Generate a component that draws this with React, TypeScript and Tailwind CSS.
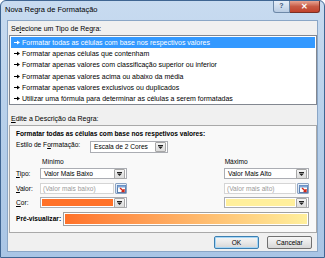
const font = "font-['Liberation_Sans',Arial,sans-serif]"

const RULES = [
  'Formatar todas as células com base nos respectivos valores',
  'Formatar apenas células que contenham',
  'Formatar apenas valores com classificação superior ou inferior',
  'Formatar apenas valores acima ou abaixo da média',
  'Formatar apenas valores exclusivos ou duplicados',
  'Utilizar uma fórmula para determinar as células a serem formatadas',
]

function RowArrow({ color }: { color: string }) {
  return (
    <svg width="6" height="5" viewBox="0 0 6 5" className="shrink-0">
      <rect x="0" y="2" width="3" height="1" fill={color} />
      <path d="M3 0.5 L6 2.5 L3 4.5 Z" fill={color} />
    </svg>
  )
}

function DropButton() {
  return (
    <div className="w-[11px] h-[10px] my-auto mr-[1px] flex items-center justify-center bg-gradient-to-b from-[#f4f4f4] to-[#dcdcdc] border border-[#a7a7a7] rounded-[1px]">
      <svg width="5" height="4" viewBox="0 0 5 4">
        <rect x="0" y="0" width="5" height="1" fill="#222" />
        <path d="M0 1.5 L5 1.5 L2.5 4 Z" fill="#222" />
      </svg>
    </div>
  )
}

function PickButton() {
  return (
    <div className="w-[12px] h-[11px] shrink-0 flex items-center justify-center bg-gradient-to-b from-[#eaf2fb] to-[#c9dcf1] border border-[#8da4c3] rounded-[1px]">
      <svg width="9" height="8" viewBox="0 0 9 8">
        <rect x="0.5" y="0.5" width="8" height="7" fill="#fff" stroke="#5a7fb0" />
        <rect x="0.5" y="0.5" width="8" height="2" fill="#7ea6d8" />
        <path d="M3 3 L7 6.5 M7 4 L7 6.5 L4.5 6.5" stroke="#d32a1a" strokeWidth="1.4" fill="none" />
      </svg>
    </div>
  )
}

function Select({ value, w }: { value: string; w: string }) {
  return (
    <div className={`${w} h-[11px] flex bg-white border border-[#abadb3]`}>
      <span className="flex-1 pl-[3px] text-[6.6px] leading-[9px] text-black truncate">{value}</span>
      <DropButton />
    </div>
  )
}

function ValueInput({ text, w }: { text: string; w: string }) {
  return (
    <div className="flex gap-[1px]">
      <div className={`${w} h-[11px] bg-white border border-[#d5d5d5] pl-[2px] text-[6.6px] leading-[9px] text-[#9a9a9a]`}>{text}</div>
      <PickButton />
    </div>
  )
}

function ColorPick({ color, w }: { color: string; w: string }) {
  return (
    <div className={`${w} h-[11px] flex bg-white border border-[#abadb3]`}>
      <div className="flex-1 m-[1px]" style={{ background: color }} />
      <DropButton />
    </div>
  )
}

function WinButton({ label, focused }: { label: string; focused?: boolean }) {
  return (
    <div
      className={`w-[45px] h-[13px] flex items-center justify-center rounded-[2px] border bg-gradient-to-b from-[#f6f6f6] via-[#e8e8e8] to-[#d6d6d6] text-[6.6px] text-black ${
        focused ? 'border-[#3c7fb1] shadow-[inset_0_0_0_1px_#a6d6f6]' : 'border-[#707070]'
      }`}
    >
      {label}
    </div>
  )
}

export default function App() {
  return (
    <div className={`${font} w-[325px] h-[258px] flex flex-col border border-[#3f6592] rounded-t-[6px] bg-gradient-to-b from-[#c8dbf0] via-[#b6cfea] to-[#a9c5e5] overflow-hidden`}>
      {/* title bar */}
      <div className="h-[19px] flex items-start shrink-0">
        <span className="pl-[4px] pt-[4px] text-[7.5px] leading-[10px] text-black">Nova Regra de Formatação</span>
        <div className="ml-auto mr-[4px] flex">
          <div className="w-[17px] h-[12px] flex items-center justify-center border border-[#6d88a8] border-t-0 rounded-bl-[3px] bg-gradient-to-b from-[#e6eef8] to-[#b9cce3] text-[7px] text-[#3d5578] font-bold">?</div>
          <div className="w-[30px] h-[12px] flex items-center justify-center border border-[#7a2f24] border-t-0 border-l-0 rounded-br-[3px] bg-gradient-to-b from-[#e8a493] via-[#c75a45] to-[#c2412b] text-[8px] text-white font-bold leading-none">✕</div>
        </div>
      </div>

      {/* client area */}
      <div className="flex-1 mx-[6px] mb-[5px] bg-[#f0f0f0] border border-[#8aa6c6] flex flex-col text-black">
        <div className="h-[10px] mt-[3px] pl-[3px] text-[7px] leading-[10px]">
          Se<span className="underline">l</span>ecione um Tipo de Regra:
        </div>

        <div className="mt-[1px] ml-[1px] w-[308px] h-[70px] bg-white border border-[#828790] pt-[1px] px-[1px] flex flex-col">
          {RULES.map((r, i) => (
            <div
              key={r}
              className={`h-[11.3px] flex items-center gap-[2px] pl-[3px] text-[7px] leading-none ${
                i === 0 ? 'bg-[#3399ff] text-white' : 'text-black'
              }`}
            >
              <RowArrow color={i === 0 ? '#fff' : '#000'} />
              <span>{r}</span>
            </div>
          ))}
        </div>

        <div className="h-[11px] mt-[9px] pl-[3px] text-[7px] leading-[10px]">
          <span className="underline">E</span>dite a Descrição da Regra:
        </div>

        <div className="ml-[1px] w-[308px] h-[108px] bg-[#f9f9f9] border border-[#a9a9a9] pl-[6px] pr-[7px] flex flex-col">
          <div className="mt-[3px] h-[10px] text-[6.6px] leading-[10px] font-bold">
            Formatar todas as células com base nos respetivos valores:
          </div>
          <div className="mt-[2px] flex items-start">
            <span className="w-[74px] text-[6.6px] leading-[8px]">
              Estilo de F<span className="underline">o</span>rmatação:
            </span>
            <div className="h-[12px] w-[78px] flex bg-white border border-[#abadb3]">
              <span className="flex-1 pl-[3px] text-[6.6px] leading-[10px]">Escala de 2 Cores</span>
              <DropButton />
            </div>
          </div>

          <div className="mt-[4px] h-[10px] flex text-[6.6px] leading-[10px]">
            <span className="ml-[26px]">Mínimo</span>
            <span className="ml-[161px]">Máximo</span>
          </div>

          <div className="mt-[1px] flex items-center text-[6.6px]">
            <span className="w-[24px]"><span className="underline">T</span>ipo:</span>
            <Select value="Valor Mais Baixo" w="w-[87px]" />
            <div className="flex-1" />
            <Select value="Valor Mais Alto" w="w-[85px]" />
          </div>

          <div className="mt-[4px] flex items-center text-[6.6px]">
            <span className="w-[24px]"><span className="underline">V</span>alor:</span>
            <ValueInput text="(Valor mais baixo)" w="w-[74px]" />
            <div className="flex-1" />
            <ValueInput text="(Valor mais alto)" w="w-[72px]" />
          </div>

          <div className="mt-[3px] flex items-center text-[6.6px]">
            <span className="w-[24px]"><span className="underline">C</span>or:</span>
            <ColorPick color="#ff7128" w="w-[87px]" />
            <div className="flex-1" />
            <ColorPick color="#ffef9c" w="w-[85px]" />
          </div>

          <div className="mt-[4px] flex items-center">
            <span className="w-[47px] text-[6.6px] font-bold">Pré-visualizar:</span>
            <div className="w-[248px] h-[14px] border border-[#a0a0a0] bg-white p-[1px]">
              <div className="w-full h-full bg-gradient-to-r from-[#ff7128] to-[#ffef9c]" />
            </div>
          </div>
        </div>

        <div className="mt-[3px] flex gap-[8px] justify-end pr-[5px]">
          <WinButton label="OK" focused />
          <WinButton label="Cancelar" />
        </div>
      </div>
    </div>
  )
}
